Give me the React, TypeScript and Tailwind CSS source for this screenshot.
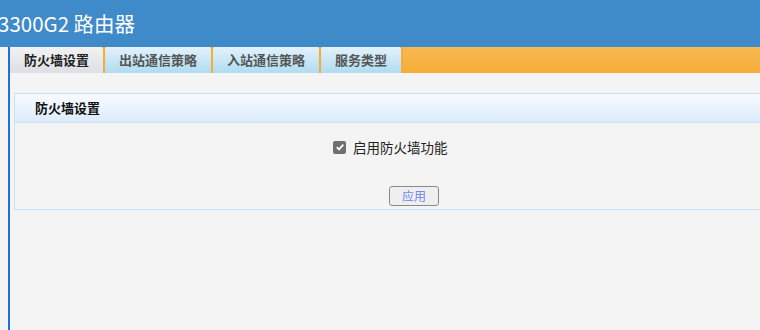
import React from "react";

const tabs = ["防火墙设置", "出站通信策略", "入站通信策略", "服务类型"];
const widths = ["w-[93px]", "w-[106px]", "w-[106px]", "w-[80px]"];

export default function App() {
  return (
    <div
      className="w-[760px] h-[330px] overflow-hidden bg-[#f4f4f4] flex flex-col"
      style={{ fontFamily: '"Microsoft YaHei", "Noto Sans CJK SC", sans-serif' }}
    >
      <div className="h-[47px] bg-[#3f8ac9] flex items-center shrink-0 overflow-hidden">
        <span className="text-white text-[20.5px] ml-[-2px] leading-none pb-[1px] whitespace-nowrap">3300G2 路由器</span>
      </div>
      <div className="flex flex-1">
        <div className="w-[10px] shrink-0 border-r-2 border-[#1f6fe0]" />
        <div className="flex-1 flex flex-col">
          <div className="h-[26px] flex bg-gradient-to-b from-[#f8b952] to-[#f6ad36]">
            {tabs.map((t, i) => (
              <div key={t} className="flex">
                <div
                  className={`${widths[i]} h-full flex items-center justify-center text-[13px] font-bold ${
                    i === 0
                      ? "bg-gradient-to-b from-[#f2f2f2] to-[#dcdfe3] text-[#222]"
                      : "bg-gradient-to-b from-[#e3f2fb] to-[#afdcf1] text-[#555]"
                  }`}
                >
                  {t}
                </div>
                <div className="w-[2px] h-full bg-[#f6ad36] relative">
                  <div className="absolute top-0 left-[-1px] w-0 h-0 border-l-[2px] border-r-[2px] border-t-[3px] border-l-transparent border-r-transparent border-t-[#f6ad36]" />
                </div>
              </div>
            ))}
          </div>
          <div className="pl-[4px] pt-[20px]">
            <div className="w-[800px] border border-[#c7e0f4] h-[117px] flex flex-col">
              <div className="h-[29px] border-b border-[#c7e0f4] bg-gradient-to-b from-[#f8fbff] to-[#dcebfb] flex items-center pl-[20px] text-[13px] font-bold text-[#111]">
                防火墙设置
              </div>
              <div className="flex-1 flex flex-col items-start">
                <div className="flex items-center mt-[14px] ml-[318px]">
                  <div className="w-[13px] h-[13px] rounded-[2px] bg-[#707070] flex items-center justify-center">
                    <svg width="10" height="10" viewBox="0 0 10 10">
                      <path d="M1.8 5.2 L4 7.4 L8.3 2.6" stroke="white" strokeWidth="1.8" fill="none" />
                    </svg>
                  </div>
                  <span className="ml-[7px] text-[13.5px] text-[#222]">启用防火墙功能</span>
                </div>
                <button className="mt-[29px] ml-[374px] w-[50px] h-[20px] border border-[#8a8a8a] rounded-[3px] bg-[#efefef] text-[12px] text-[#7186f2] leading-none flex items-center justify-center">
                  应用
                </button>
              </div>
            </div>
          </div>
        </div>
      </div>
    </div>
  );
}
